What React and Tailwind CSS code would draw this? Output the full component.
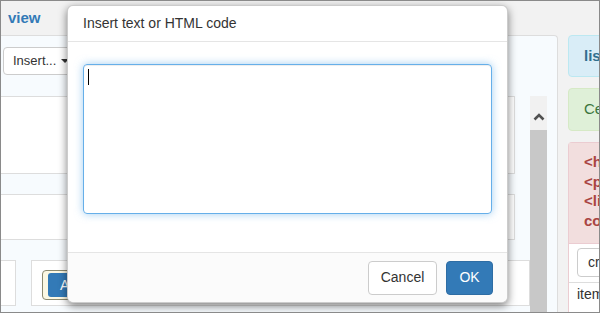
import React from "react";

// Background editor page, partly hidden by the modal
function Page() {
  return (
    <div className="flex h-full">
      {/* left column: heading + editor panel */}
      <div className="flex w-[557px] shrink-0 flex-col">
        <div className="flex h-[34px] items-center pl-[7px]">
          <span className="text-[15px] font-bold text-[#337ab7]">view</span>
        </div>
        <div className="flex flex-1 flex-col rounded-tr-[4px] border-t border-r border-[#ddd] bg-[#f7fbfe]">
          <div className="h-[60px] pl-[2px] pt-[11px]">
            <button className="flex h-[28px] items-center gap-[5px] rounded-[4px] border border-[#ccc] bg-white pl-[9px] pr-[10px] text-[13px] text-[#333]">
              Insert...
              <span className="inline-block border-x-[4px] border-t-[4px] border-x-transparent border-t-[#333]" />
            </button>
          </div>
          <div className="flex flex-1">
            <div className="flex flex-1 flex-col">
              <div className="mr-[15px] h-[78px] border border-l-0 border-[#ddd] bg-white" />
              <div className="mr-[15px] mt-[20px] h-[46px] border border-l-0 border-[#ddd] bg-white" />
              <div className="mt-[20px] flex h-[46px]">
                <div className="w-[15px] border border-l-0 border-[#ddd] bg-white" />
                <div className="ml-[15px] flex-1 border border-[#ddd] bg-white pl-[10px] pt-[9px]">
                  <div className="inline-flex h-[30px] items-center rounded-[4px] border border-[#8c8a70] bg-[#fcf8e3] px-[5px]">
                    <span className="flex h-[24px] items-center rounded-[3px] bg-[#337ab7] px-[12px] text-[14px] text-white">
                      Add
                    </span>
                  </div>
                </div>
              </div>
            </div>
            {/* scrollbar */}
            <div className="flex w-[17px] flex-col">
              <div className="flex h-[34px] items-center justify-center bg-[#f1f1f1] pt-[8px]">
                <svg width="12" height="8" viewBox="0 0 12 8">
                  <polyline points="1.5,6.5 6,2 10.5,6.5" fill="none" stroke="#505050" strokeWidth="2.6" />
                </svg>
              </div>
              <div className="flex-1 bg-[#c8c8c8]" />
            </div>
            <div className="w-[10px]" />
          </div>
        </div>
      </div>

      {/* right column: alerts */}
      <div className="ml-[10px] flex w-[80px] shrink-0 flex-col">
        <div className="mt-[34px] flex h-[42px] items-center whitespace-nowrap rounded-[4px] border border-[#bce8f1] bg-[#d9edf7] pl-[15px] text-[15px] font-bold text-[#31708f]">
          list view
        </div>
        <div className="mt-[11px] flex h-[43px] items-center whitespace-nowrap rounded-[4px] border border-[#d6e9c6] bg-[#dff0d8] pl-[15px] text-[15px] text-[#3c763d]">
          Centered
        </div>
        <div className="mt-[11px] flex flex-1 flex-col rounded-t-[4px] border border-b-0 border-[#ebccd1] bg-white">
          <div className="h-[101px] whitespace-nowrap border-b border-[#ebccd1] bg-[#f2dede] pl-[15px] pt-[9px] text-[15px] font-bold leading-[19.7px] text-[#a94442]">
            <div>&lt;h1&gt;</div>
            <div>&lt;p&gt;</div>
            <div>&lt;li&gt;</div>
            <div>code</div>
          </div>
          <div className="pl-[8px] pt-[4px]">
            <button className="flex h-[29px] items-center rounded-[4px] border border-[#ccc] bg-white px-[10px] text-[14px] text-[#333]">
              create
            </button>
          </div>
          <div className="mt-[5px] border-t border-[#ddd] pl-[8px] pt-[1px] text-[14px] leading-[20px] text-[#333]">
            item
          </div>
        </div>
      </div>
    </div>
  );
}

function InsertDialog() {
  return (
    <div className="absolute left-[66px] top-[4px] flex h-[298px] w-[441px] flex-col rounded-[6px] border border-black/20 bg-white shadow-[0_3px_9px_rgba(0,0,0,0.5)]">
      <div className="flex h-[36px] shrink-0 items-center border-b border-[#e5e5e5] pl-[15px] text-[14px] text-[#333]">
        Insert text or HTML code
      </div>
      <div className="flex-1 px-[15px] pt-[22px]">
        <div className="h-[150px] rounded-[4px] border border-[#66afe9] px-[4px] pt-[4px] shadow-[inset_0_1px_1px_rgba(0,0,0,0.075),0_0_8px_rgba(102,175,233,0.6)]">
          <div className="h-[16px] w-px bg-black" />
        </div>
      </div>
      <div className="flex h-[50px] shrink-0 items-center justify-end gap-[9px] rounded-b-[6px] border-t border-[#e5e5e5] bg-[#fbfbfb] pr-[14px]">
        <button className="h-[34px] w-[69px] rounded-[4px] border border-[#ccc] bg-white text-[14px] text-[#333]">
          Cancel
        </button>
        <button className="h-[34px] w-[47px] rounded-[4px] border border-[#2e6da4] bg-[#337ab7] text-[14px] text-white">
          OK
        </button>
      </div>
    </div>
  );
}

export default function App() {
  return (
    <div className="relative h-[313px] w-[600px] overflow-hidden border border-[#8a8a8a] bg-[#f2f2f2] font-['Liberation_Sans',Arial,sans-serif]">
      <Page />
      <InsertDialog />
    </div>
  );
}
